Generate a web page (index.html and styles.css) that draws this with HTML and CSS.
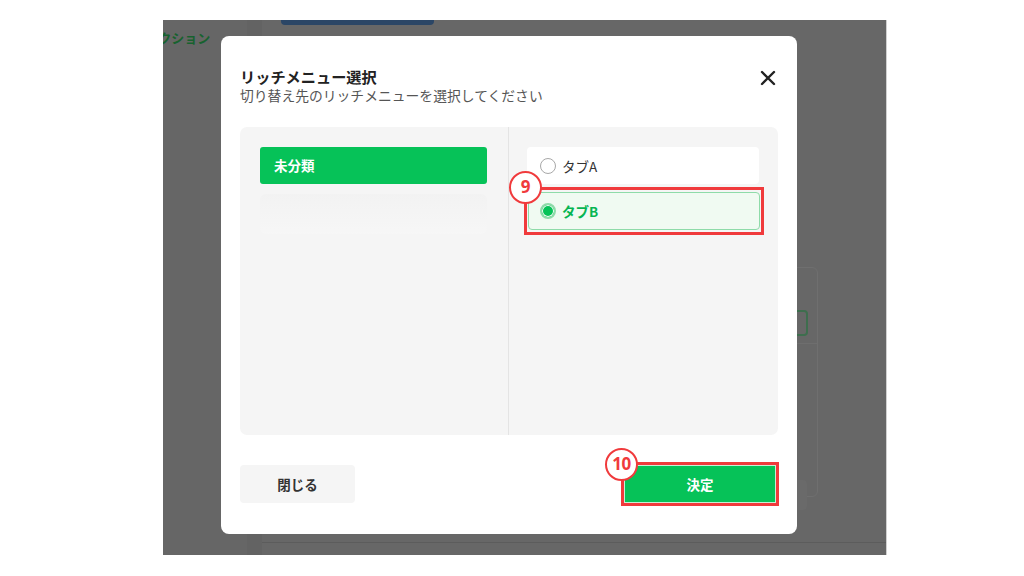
FILE: index.html
```html
<!DOCTYPE html>
<html lang="ja">
<head>
<meta charset="utf-8">
<title>リッチメニュー選択</title>
<link rel="stylesheet" href="styles.css">
</head>
<body>
<div class="page">
  <div class="shot">
    <div class="app">
      <div class="app-side">
        <div class="side-title">アクション</div>
      </div>
      <div class="app-strip"></div>
      <div class="app-main">
        <div class="app-topbar"></div>
        <div class="app-card">
          <div class="app-card-btn"></div>
          <div class="app-card-line"></div>
          <div class="app-card-box"></div>
        </div>
        <div class="app-bottom-line"></div>
      </div>
    </div>

    <div class="modal" role="dialog">
      <div class="modal-head">
        <div class="modal-titles">
          <div class="modal-title">リッチメニュー選択</div>
          <div class="modal-sub">切り替え先のリッチメニューを選択してください</div>
        </div>
        <div class="modal-close" aria-label="閉じる">
          <svg width="16" height="16" viewBox="0 0 16 16"><path d="M2 2 L14 14 M14 2 L2 14" stroke="#222" stroke-width="2.4" stroke-linecap="round"/></svg>
        </div>
      </div>

      <div class="panel">
        <div class="panel-left">
          <div class="cat-item">未分類</div>
          <div class="cat-ghost"></div>
        </div>
        <div class="panel-right">
          <label class="tab-item">
            <span class="radio"></span>
            <span class="tab-label">タブA</span>
          </label>
          <div class="highlight hl-tab">
            <label class="tab-item selected">
              <span class="radio on"></span>
              <span class="tab-label">タブB</span>
            </label>
            <span class="badge badge-9">9</span>
          </div>
        </div>
      </div>

      <div class="modal-foot">
        <button class="btn btn-close">閉じる</button>
        <div class="highlight hl-btn">
          <button class="btn btn-ok">決定</button>
          <span class="badge badge-10">10</span>
        </div>
      </div>
    </div>
  </div>
</div>
</body>
</html>
```

FILE: styles.css
```css
* { box-sizing: border-box; }
html, body { margin: 0; padding: 0; background: #ffffff; }
body {
  font-family: "Noto Sans CJK JP", "Noto Sans", "Liberation Sans", sans-serif;
  width: 1024px;
  height: 576px;
  overflow: hidden;
}
.page {
  padding: 20px 0 0 163px;
}
.shot {
  position: relative;
  width: 724px;
  height: 535px;
  background: #676767;
  overflow: hidden;
  border-right: 1px solid #d0d0d0;
}

/* dimmed background application */
.app {
  display: flex;
  height: 100%;
}
.app-side {
  width: 84px;
  background: #666666;
  position: relative;
  overflow: hidden;
}
.side-title {
  margin: 8px 0 0 -17px;
  font-size: 13px;
  line-height: 20px;
  font-weight: 700;
  color: #17622f;
  white-space: nowrap;
}
.app-strip {
  width: 15px;
  background: #636363;
}
.app-main {
  flex: 1;
  position: relative;
}
.app-topbar {
  position: absolute;
  left: 19px;
  top: 0;
  width: 153px;
  height: 5px;
  background: #2b4666;
  border-radius: 0 0 4px 4px;
}
.app-card {
  position: absolute;
  left: 460px;
  top: 247px;
  width: 96px;
  height: 230px;
  border: 1px solid #6f6f6f;
  border-radius: 6px;
}
.app-card-btn {
  position: absolute;
  right: 9px;
  top: 42px;
  width: 30px;
  height: 26px;
  border: 2px solid #3e6e4e;
  border-radius: 4px;
}
.app-card-line {
  position: absolute;
  left: 0;
  right: 0;
  top: 75px;
  border-top: 1px solid #6e6e6e;
}
.app-card-box {
  position: absolute;
  right: 10px;
  top: 212px;
  width: 30px;
  height: 30px;
  background: #6a6a6a;
  border-radius: 4px;
}
.app-bottom-line {
  position: absolute;
  left: 0;
  right: 0;
  top: 522px;
  border-top: 1px solid #5c5c5c;
}

/* modal */
.modal {
  position: absolute;
  left: 58px;
  top: 16px;
  width: 576px;
  height: 498px;
  background: #ffffff;
  border-radius: 8px;
  padding: 30px 19px 31px 19px;
  display: flex;
  flex-direction: column;
}
.modal-head {
  display: flex;
  justify-content: space-between;
  align-items: flex-start;
  color: #222;
}
.modal-title {
  font-size: 15.2px;
  font-weight: 700;
  line-height: 20px;
  color: #222;
}
.modal-sub {
  font-size: 13.8px;
  line-height: 18px;
  color: #555;
}
.modal-close {
  width: 16px;
  height: 16px;
  margin: 4px 2px 0 0;
}
.modal-close svg { display: block; }

.panel {
  margin-top: 23px;
  height: 308px;
  background: #f5f5f5;
  border-radius: 7px;
  display: grid;
  grid-template-columns: 269px 1fr;
}
.panel-left {
  padding: 20px 21px 0 20px;
  border-right: 1px solid #e4e4e4;
}
.cat-item {
  height: 37px;
  background: #06c258;
  border-radius: 3px;
  color: #fff;
  font-weight: 700;
  font-size: 13.5px;
  line-height: 37px;
  padding-left: 14px;
}
.cat-ghost {
  margin-top: 10px;
  height: 40px;
  border-radius: 6px;
  background: linear-gradient(180deg, #f1f1f1 0%, #f7f7f7 100%);
  opacity: 0.7;
}
.panel-right {
  padding: 20px 19px 0 18px;
  display: flex;
  flex-direction: column;
  gap: 3px;
}
.tab-item {
  height: 37px;
  background: #ffffff;
  border-radius: 4px;
  display: flex;
  align-items: center;
  padding-left: 13px;
  gap: 6px;
  font-size: 13.5px;
  color: #333;
}
.radio {
  width: 16px;
  height: 16px;
  border: 1px solid #a8a8a8;
  border-radius: 50%;
  background: #fff;
  flex: none;
}
.radio.on {
  border: 2px solid #8edba9;
  background: #06c258;
  box-shadow: inset 0 0 0 1px #fff;
}
.highlight {
  position: relative;
  border: 3px solid #f03a3c;
}
.hl-tab {
  margin: 0 -5px 0 -3px;
  padding: 2px 1px;
}
.tab-item.selected {
  background: #f0faf2;
  border: 1px solid #8edba9;
  height: 38px;
  padding-left: 11px;
  font-weight: 700;
  color: #06b552;
}
.badge {
  position: absolute;
  width: 33px;
  height: 33px;
  border-radius: 50%;
  border: 2.5px solid #f03a3c;
  background: #fff;
  color: #f03a3c;
  font-weight: 700;
  font-size: 17px;
  line-height: 28px;
  text-align: center;
  font-family: "Noto Sans", "Liberation Sans", sans-serif;
}
.badge-9 {
  left: -18px;
  top: -19px;
}
.badge-10 {
  left: -19px;
  top: -17px;
  letter-spacing: -0.5px;
}

.modal-foot {
  margin-top: auto;
  display: flex;
  justify-content: space-between;
  align-items: flex-end;
}
.btn {
  font-family: "Noto Sans CJK JP", "Noto Sans", sans-serif;
  font-weight: 700;
  font-size: 13.5px;
  border: 0;
  border-radius: 4px;
  height: 38px;
  padding: 0;
  cursor: pointer;
}
.btn-close {
  width: 115px;
  background: #f5f5f5;
  color: #333;
}
.hl-btn {
  margin-right: -1px;
  margin-bottom: -3px;
}
.btn-ok {
  display: block;
  width: 152px;
  background: #06c258;
  color: #fff;
  border-radius: 0;
  border: 1px solid #c9eed6;
}
```
